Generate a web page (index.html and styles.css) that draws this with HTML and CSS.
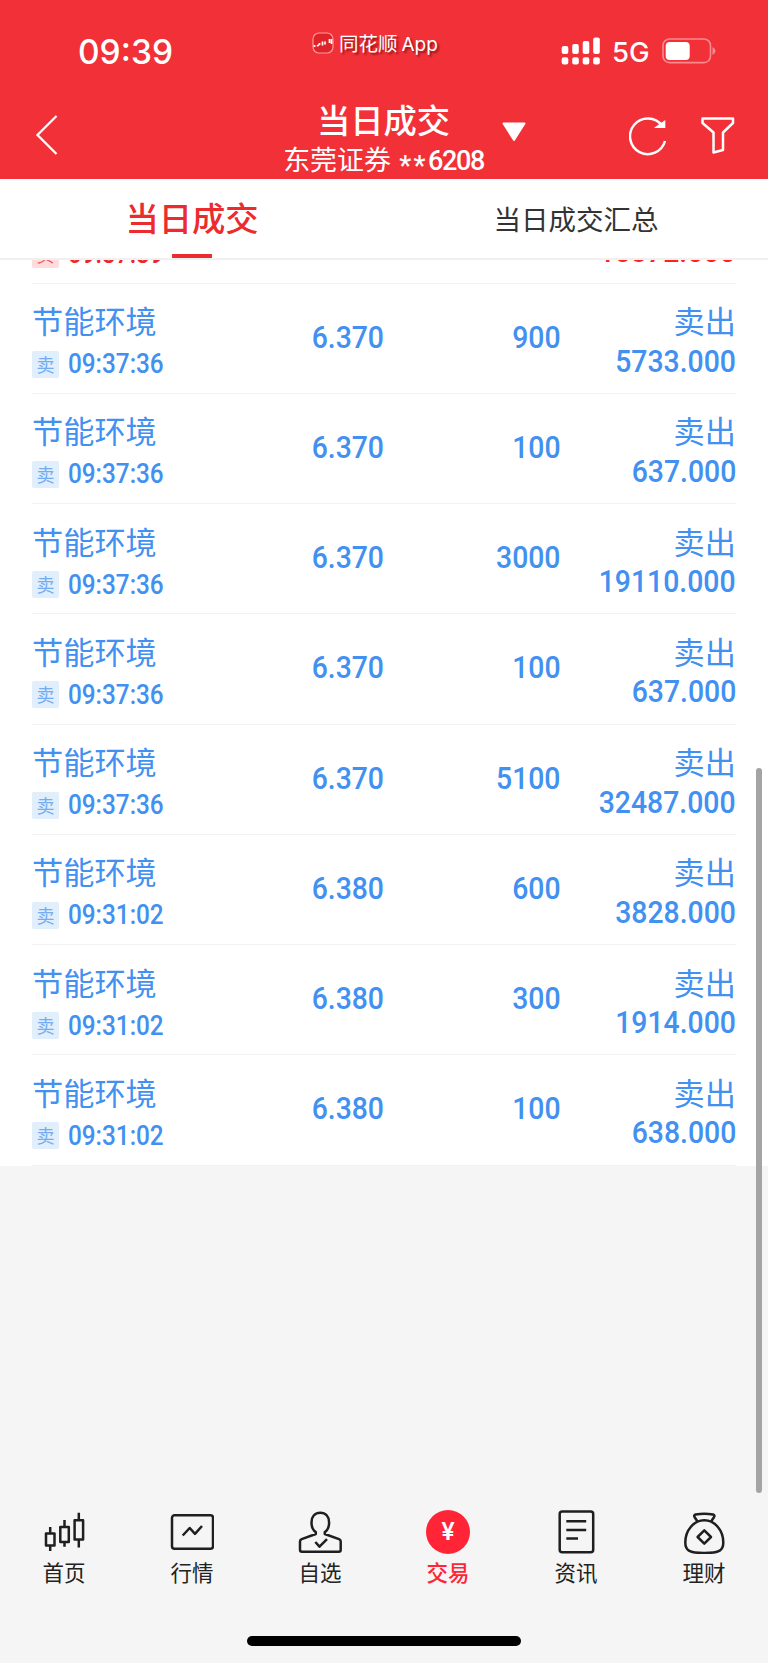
FILE: index.html
```
<!DOCTYPE html>
<html lang="zh-CN">
<head>
    <meta charset="UTF-8">
    <meta name="viewport" content="width=device-width, initial-scale=1.0">
    <title>当日成交</title>
    <link rel="stylesheet" href="styles.css">
</head>
<body>
    <div class="app">
        <!-- 顶部 -->
        <header class="header">
            <div class="status-bar">
                <div class="clock">09:39</div>
                <div class="app-mark">
                    <svg width="22" height="22" viewBox="0 0 22 22" fill="none" stroke="#fff">
                        <rect x="1" y="1" width="20" height="20" rx="6" fill="#e02229" stroke="#f79a9d" stroke-width="1.2"/>
                        <path d="M1.5 13.5l2 1M5 14l2-1M7.5 11v2M10.5 9.5v4M13 9.5v3M17.5 7v4M19.5 7v5" stroke-width="1.7"/>
                    </svg>
                    <span>同花顺<span class="app-word">App</span></span>
                </div>
                <div class="status-right">
                    <svg width="40" height="28" viewBox="0 0 40 28" fill="#fff">
                        <rect x="0.7" y="9" width="6.6" height="8" rx="2"/>
                        <rect x="11.2" y="7" width="6.6" height="10" rx="2"/>
                        <rect x="21.7" y="4" width="6.6" height="13" rx="2"/>
                        <rect x="32.2" y="0.5" width="6.6" height="16.5" rx="2"/>
                        <rect x="0.7" y="20.2" width="6.6" height="7.3" rx="2"/>
                        <rect x="11.2" y="20.2" width="6.6" height="7.3" rx="2"/>
                        <rect x="21.7" y="20.2" width="6.6" height="7.3" rx="2"/>
                        <rect x="32.2" y="20.2" width="6.6" height="7.3" rx="2"/>
                    </svg>
                    <span class="network">5G</span>
                    <svg class="battery" width="54" height="26" viewBox="0 0 54 26">
                        <rect x="1" y="1" width="47.5" height="23.6" rx="6.5" fill="none" stroke="#f78b8f" stroke-width="1.6"/>
                        <rect x="3.7" y="4" width="24" height="18" rx="4" fill="#fff"/>
                        <path d="M50.5 9q3 1.5 3 4t-3 4z" fill="#f78b8f"/>
                    </svg>
                </div>
            </div>
            <div class="title-bar">
                <svg class="back" width="24" height="42" viewBox="0 0 24 42" fill="none" stroke="#fff" stroke-width="2.3">
                    <path d="M21.5 2L2.5 21l19 19"/>
                </svg>
                <div class="title">
                    <h1>当日成交</h1>
                    <p>东莞证券<span class="account"><span class="mask">**</span>6208</span></p>
                </div>
                <svg class="caret" width="24" height="20" viewBox="0 0 24 20">
                    <path d="M1.5 1.5h21L12 18z" fill="#fff" stroke="#fff" stroke-width="2" stroke-linejoin="round"/>
                </svg>
                <div class="actions">
                    <svg width="38" height="40" viewBox="0 0 38 40" fill="none" stroke="#fff" stroke-width="2.5">
                        <path d="M33 8.5A17.8 17.8 0 1 0 36 24"/>
                        <path d="M28 10h7.3V5z" fill="#fff" stroke-width="2"/>
                    </svg>
                    <svg width="34" height="38" viewBox="0 0 34 38" fill="none" stroke="#fff" stroke-width="2.5" stroke-linejoin="round">
                        <path d="M1.5 1.5H32V6L22 15.5V33l-9.5 2.5v-20L1.5 6z"/>
                    </svg>
                </div>
            </div>
        </header>

        <!-- 标签页 -->
        <nav class="tabs">
            <a class="tab active">当日成交</a>
            <a class="tab">当日成交汇总</a>
        </nav>

        <!-- 成交列表 -->
        <main class="list">
            <div class="row buy">
                <div class="meta"><i class="tag">买</i><span class="time">09:37:39</span></div>
                <div class="amount">18372.000</div>
            </div>
            <div class="row">
                <div class="stock"><span class="name">节能环境</span><span class="meta"><i class="tag">卖</i><span class="time">09:37:36</span></span></div>
                <div class="price">6.370</div>
                <div class="count">900</div>
                <div class="deal"><span class="side">卖出</span><span class="amount">5733.000</span></div>
            </div>
            <div class="row">
                <div class="stock"><span class="name">节能环境</span><span class="meta"><i class="tag">卖</i><span class="time">09:37:36</span></span></div>
                <div class="price">6.370</div>
                <div class="count">100</div>
                <div class="deal"><span class="side">卖出</span><span class="amount">637.000</span></div>
            </div>
            <div class="row">
                <div class="stock"><span class="name">节能环境</span><span class="meta"><i class="tag">卖</i><span class="time">09:37:36</span></span></div>
                <div class="price">6.370</div>
                <div class="count">3000</div>
                <div class="deal"><span class="side">卖出</span><span class="amount">19110.000</span></div>
            </div>
            <div class="row">
                <div class="stock"><span class="name">节能环境</span><span class="meta"><i class="tag">卖</i><span class="time">09:37:36</span></span></div>
                <div class="price">6.370</div>
                <div class="count">100</div>
                <div class="deal"><span class="side">卖出</span><span class="amount">637.000</span></div>
            </div>
            <div class="row">
                <div class="stock"><span class="name">节能环境</span><span class="meta"><i class="tag">卖</i><span class="time">09:37:36</span></span></div>
                <div class="price">6.370</div>
                <div class="count">5100</div>
                <div class="deal"><span class="side">卖出</span><span class="amount">32487.000</span></div>
            </div>
            <div class="row">
                <div class="stock"><span class="name">节能环境</span><span class="meta"><i class="tag">卖</i><span class="time">09:31:02</span></span></div>
                <div class="price">6.380</div>
                <div class="count">600</div>
                <div class="deal"><span class="side">卖出</span><span class="amount">3828.000</span></div>
            </div>
            <div class="row">
                <div class="stock"><span class="name">节能环境</span><span class="meta"><i class="tag">卖</i><span class="time">09:31:02</span></span></div>
                <div class="price">6.380</div>
                <div class="count">300</div>
                <div class="deal"><span class="side">卖出</span><span class="amount">1914.000</span></div>
            </div>
            <div class="row">
                <div class="stock"><span class="name">节能环境</span><span class="meta"><i class="tag">卖</i><span class="time">09:31:02</span></span></div>
                <div class="price">6.380</div>
                <div class="count">100</div>
                <div class="deal"><span class="side">卖出</span><span class="amount">638.000</span></div>
            </div>
        </main>

        <!-- 底部导航 -->
        <footer class="footer">
            <nav class="bottom-nav">
                <a class="nav-item">
                    <svg class="icon" viewBox="0 0 44 44">
                        <path d="M4 23.5h8.5v12H4zM8.2 23.500V17M8.2 35.5V41M18.3 17h8.5v15h-8.5zM22.5 17v-7M22.5 32v4.700M32.600 10.200h8.5v19.300h-8.5zM36.800 10.200V2.800M36.800 29.500v8"/>
                    </svg>
                    <span>首页</span>
                </a>
                <a class="nav-item">
                    <svg class="icon" viewBox="0 0 44 44">
                        <rect x="2" y="5.3" width="41" height="33.4" rx="2.5"/>
                        <path d="M12.7 25.5l7-7.5 5.3 5.8 7-7.8"/>
                    </svg>
                    <span>行情</span>
                </a>
                <a class="nav-item">
                    <svg class="icon" viewBox="0 0 44 44">
                        <path d="M17.800 22c-2.500-1.500-4.300-4.500-4.300-9.500 0-6 3.500-9.800 8.800-9.800s8.800 3.800 8.800 9.800c0 5-1.800 8-4.300 9.500v2L41 29.200q1.700.7 1.700 2.300v8.300q0 2-2 2H4q-2 0-2-2v-8.300q0-1.600 1.700-2.300L17.800 24z"/>
                        <path d="M17.300 32l4.200 4.700 7.500-7.500"/>
                    </svg>
                    <span>自选</span>
                </a>
                <a class="nav-item active">
                    <span class="icon coin">¥</span>
                    <span>交易</span>
                </a>
                <a class="nav-item">
                    <svg class="icon" viewBox="0 0 44 44">
                        <rect x="5.7" y="1.5" width="33.5" height="40.7" rx="2.5"/>
                        <path d="M12.3 11.300h19.900M12.300 20h19.900M12.300 28.400H24"/>
                    </svg>
                    <span>资讯</span>
                </a>
                <a class="nav-item">
                    <svg class="icon" viewBox="0 0 44 44">
                        <path d="M15.5 11.500L12.500 7q-1-1.800 1-2.500 8.800-1.500 17.600 0 2 .7 1 2.500l-3 4.500"/>
                        <path d="M22.300 10.300C12 10.300 3.300 20 3.300 32.500c0 7.500 3.200 10.500 19 10.500s19-3 19-10.500c0-12.500-8.700-22.200-19-22.200z"/>
                        <path d="M22.300 20.300L29 27l-6.700 6.700L15.600 27z"/>
                    </svg>
                    <span>理财</span>
                </a>
            </nav>
            <div class="home-bar"></div>
        </footer>
        <div class="scrollbar"></div>
    </div>
</body>
</html>
```
FILE: styles.css
```
* { margin: 0; padding: 0; box-sizing: border-box; }
body {
    font-family: "Noto Sans CJK SC", sans-serif;
    background: #f5f5f5;
}
.app {
    position: relative; width: 768px; height: 1663px; overflow: hidden;
    display: flex; flex-direction: column;
}
svg { display: block; flex: none; }

/* 顶部 */
.header { height: 179px; background: #f23038; color: #fff; }
.status-bar {
    height: 100px; display: grid; grid-template-columns: 312px 1fr 207px;
    align-items: start; font-family: Inter, "Noto Sans CJK SC", sans-serif;
}
.clock {
    padding: 32px 0 0 78px; font-size: 33.5px; line-height: 40px; font-weight: 500;
}
.app-mark {
    display: flex; gap: 5px; padding-top: 31px;
    font-size: 19.5px; line-height: 26px; text-shadow: 2px 2px 2px rgba(90,0,0,0.6);
}
.app-mark svg { margin-top: 1px; }
.app-word { margin-left: 4px; font-size: 19px; }
.status-right { display: flex; padding-top: 37px; }
.network { margin-left: 11px; font-size: 27.5px; line-height: 31px; width: 50px; font-weight: 500; }
.battery { margin-top: 1px; }
.title-bar {
    display: grid; grid-template-columns: 283px 201px 130px 1fr;
    grid-template-rows: 79px;
}
.back { margin: 14px 0 0 35px; }
.title { text-align: center; white-space: nowrap; }
.title h1 { font-size: 33.3px; line-height: 38px; font-weight: 500; }
.title p { font-size: 27px; line-height: 42px; }
.account {
    display: inline-block; margin-left: 8px; font-family: Roboto, sans-serif;
    font-size: 27px; font-weight: 500; letter-spacing: -1.4px;
}
.mask { letter-spacing: 2.5px; vertical-align: -5px; line-height: 1; }
.caret { margin: 22px 0 0 18px; }
.actions { display: flex; gap: 34px; padding: 17px 0 0 15px; }

/* 标签页 */
.tabs {
    display: flex; height: 81px; background: #fff; flex: none;
    border-bottom: 2px solid #f0f0f0;
}
.tab {
    flex: 1; display: flex; flex-direction: column; align-items: center;
    font-size: 27.5px; line-height: 78px; color: #333;
}
.tab.active { font-size: 33.3px; line-height: 76px; font-weight: 500; color: #ec2b2e; }
.tab.active::after { content: ""; width: 40px; height: 4px; margin-top: -1px; background: #ec2b2e; }

/* 成交列表 */
.list { overflow: hidden; background: #fff; flex: none; }
.row {
    height: 110.25px; margin: 0 32px; display: grid;
    grid-template-columns: 240px 112px 176.5px 1fr;
    border-bottom: 1px solid #f2f2f2; color: #4290f0;
}
.stock, .deal { display: flex; flex-direction: column; }
.name, .side { font-size: 31.2px; line-height: 40px; padding-top: 16.5px; height: 58px; }
.meta { display: flex; align-items: center; margin-top: 9px; height: 27px; }
.tag {
    width: 27px; height: 27px; margin-right: 9px; border-radius: 2px; background: #e1eefc;
    font-size: 18px; line-height: 26px; font-style: normal; text-align: center; color: #74acf3;
}
.time, .price, .count, .amount {
    font-family: Roboto, sans-serif; font-size: 31px; font-weight: 500; line-height: 36px;
    transform: scaleX(0.915); transform-origin: right;
}
.time { font-size: 27px; line-height: 27px; transform: scaleX(0.9); transform-origin: left; padding-top: 1px; }
.price, .count { padding-top: 36px; text-align: right; }
.deal { align-items: flex-end; }
.amount { margin-top: 2px; }

/* 滚动到一半的买入行 */
.row.buy {
    height: 23.5px; grid-template-columns: 1fr auto; grid-template-rows: 22.5px;
    align-items: end; color: #ee2529;
}
.buy .meta { margin-bottom: 15px; }
.buy .amount { margin-bottom: 13px; color: #ff2020; }
.buy .tag { background: #fddcdd; color: #f25c5f; }

/* 底部导航 */
.footer { margin-top: auto; height: 153px; }
.bottom-nav { display: flex; height: 126px; }
.nav-item {
    flex: 1; display: flex; flex-direction: column; align-items: center;
    font-size: 21.5px; line-height: 29px; color: #222;
}
.icon {
    width: 44px; height: 44px; margin-bottom: 3px;
    fill: none; stroke: #1f1f1f; stroke-width: 2.5; stroke-linejoin: round;
}
.nav-item.active { color: #ff2436; font-weight: 500; }
.coin {
    border-radius: 50%; background: #ff2436; color: #fff; font-family: Inter, sans-serif;
    font-size: 24px; line-height: 44px; font-weight: 600; text-align: center;
}
.home-bar { width: 274px; height: 10px; margin: 0 auto; border-radius: 5px; background: #000; }
.scrollbar {
    position: absolute; right: 6px; top: 768px; width: 6px; height: 725px;
    border-radius: 3px; background: #a4a4a4;
}
```
